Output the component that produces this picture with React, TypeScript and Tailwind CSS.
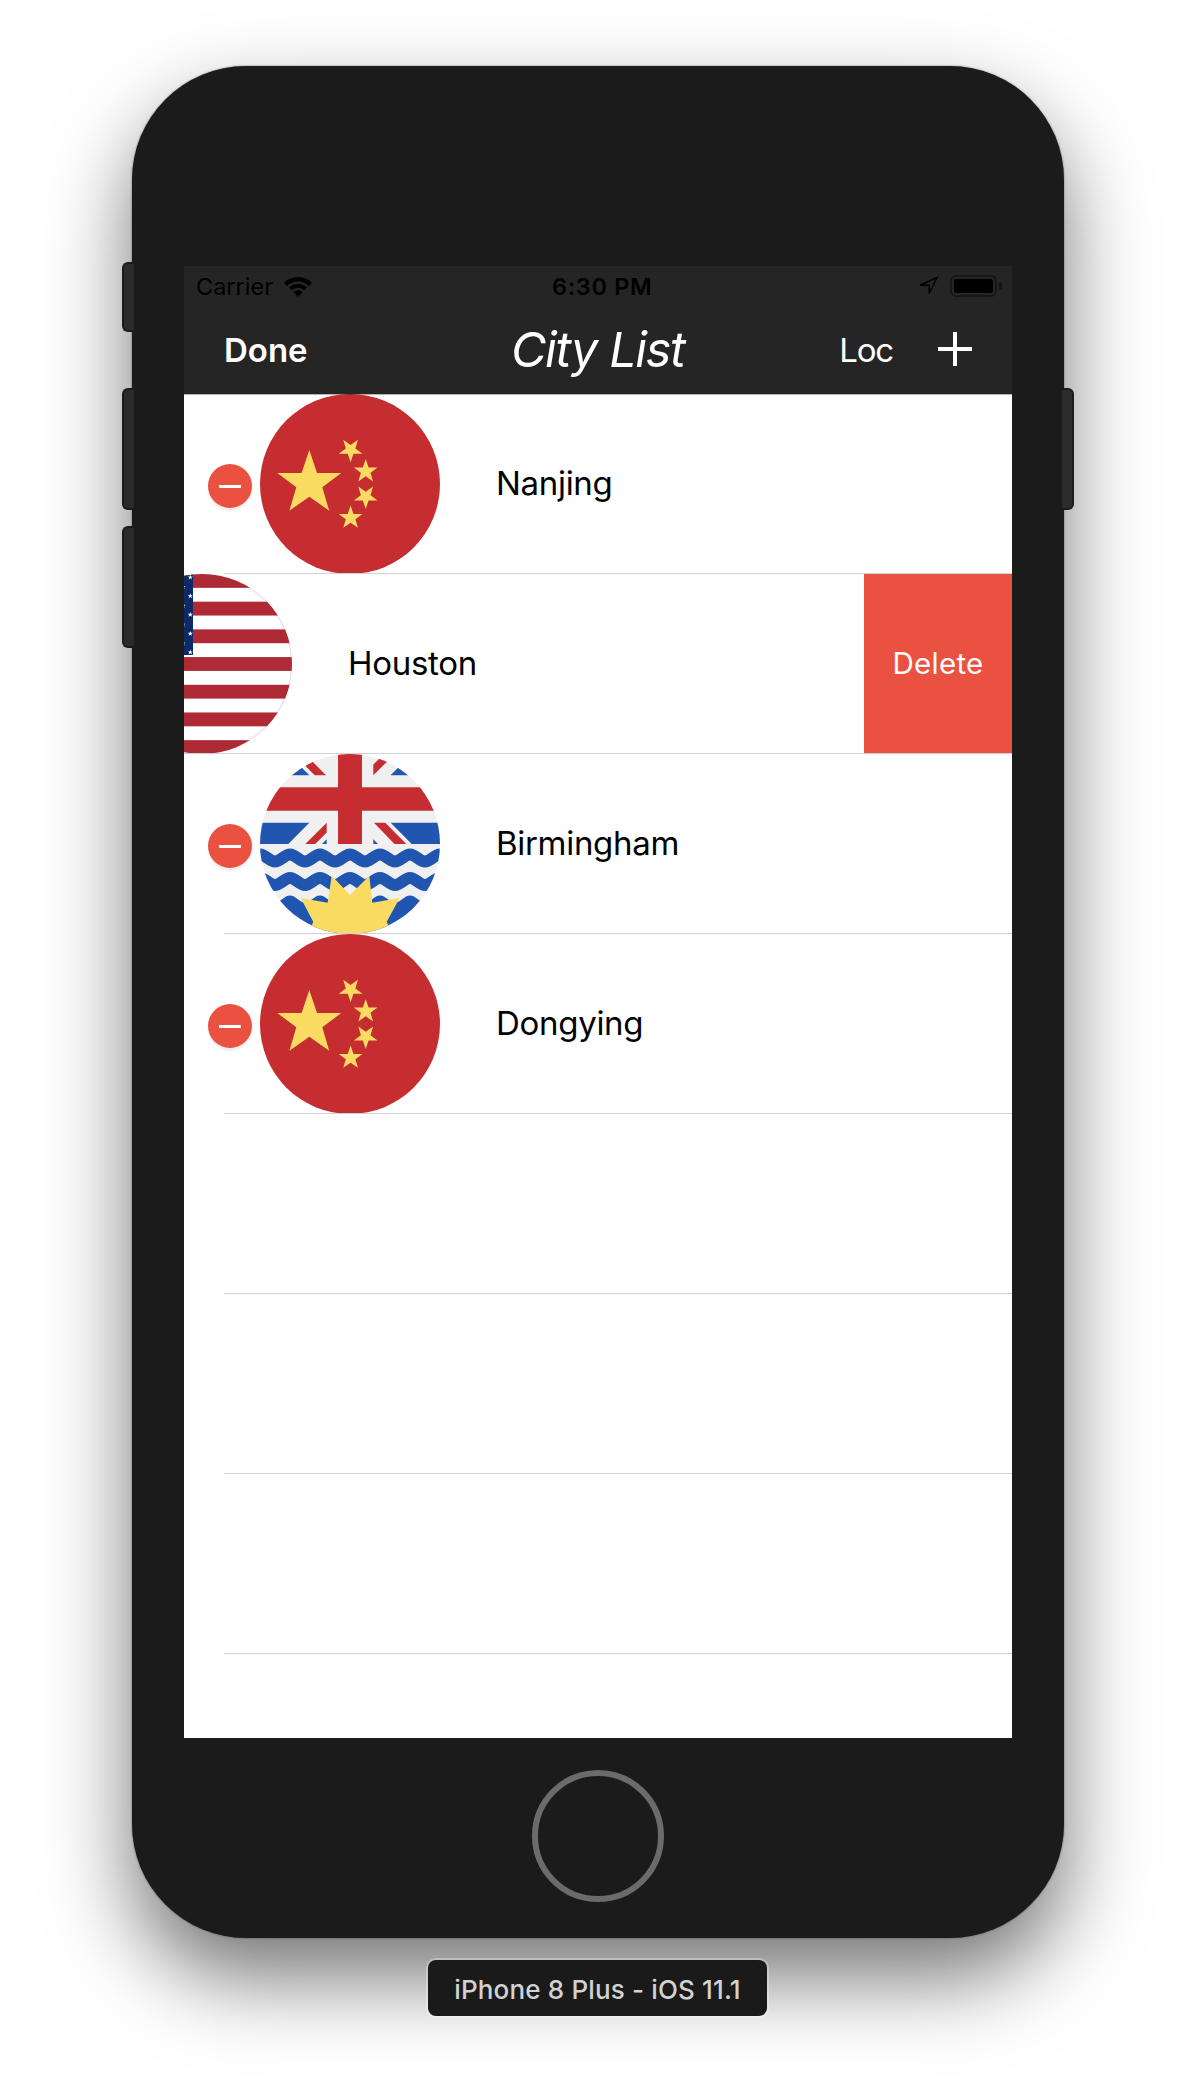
import type { ReactNode } from 'react';

const STAR =
  'M0 0L7.7 23H32L13 37.3L19.9 60.7L0 46.7L-19.9 60.7L-13 37.3L-32 23H-7.7Z';

function Flag({ label, children }: { label: string; children: ReactNode }) {
  return (
    <span role="img" aria-label={label} className="block size-[180px] shrink-0 overflow-hidden rounded-full">
      <svg viewBox="0 0 180 180" className="block size-full">
        {children}
      </svg>
    </span>
  );
}

function ChinaFlag() {
  return (
    <Flag label="China">
      <rect width="180" height="180" fill="#c52d31" />
      <g fill="#f9db61">
        <path d={STAR} transform="translate(49.3 56)" />
        <path d={STAR} transform="translate(90.6 68.3) scale(.37 -.37)" />
        <path d={STAR} transform="translate(105.7 65) scale(.37)" />
        <path d={STAR} transform="translate(105.7 115) scale(.37 -.37)" />
        <path d={STAR} transform="translate(90.6 111.4) scale(.37)" />
      </g>
    </Flag>
  );
}

function UsaFlag() {
  const h = 180 / 13;
  const miniStar = (x: number, y: number) => (
    <path key={`${x}-${y}`} d={STAR} transform={`translate(${x} ${y - 2.4}) scale(.08)`} />
  );
  return (
    <Flag label="United States">
      <rect width="180" height="180" fill="#fff" />
      {[0, 2, 4, 6, 8, 10, 12].map((i) => (
        <rect key={i} y={i * h} width="180" height={h} fill="#ae2a35" />
      ))}
      <rect width="81" height="81" fill="#0b2a66" />
      <g fill="#fff">
        {[3, 21.7, 40.3, 59.3, 78].map((y) => miniStar(78.3, y))}
        {[12.7, 31.4, 50.2, 69].map((y) => miniStar(71, y))}
      </g>
      <circle cx="90" cy="90" r="89.700" fill="none" stroke="#ae2a35" strokeOpacity=".4" strokeWidth=".7" />
    </Flag>
  );
}

/* A horizontal wavy edge whose crests fall on multiples of 30. */
function edge(y: number, amp: number) {
  let d = '';
  for (let x = 0; x < 180; x += 30) {
    d += `C${x + 5.5} ${y - amp} ${x + 9.5} ${y + amp} ${x + 15} ${y + amp}`;
    d += `C${x + 20.5} ${y + amp} ${x + 24.5} ${y - amp} ${x + 30} ${y - amp}`;
  }
  return `M0 ${y - amp}${d}`;
}

function ColumbiaFlag() {
  return (
    <Flag label="British Columbia">
      <rect width="180" height="180" fill="#f0f0f0" />
      <g fill="#2055b0">
        <path d="M49.3 21.3L28 0H0V21.3ZM130.5 21.3L152 0H180V21.3Z" />
        <path d="M0 68.7H49.3L28.3 90H0ZM130.7 68.7H180V90H151.7Z" />
        <path d="M66.7 85.2V90H62ZM113.3 85.2V90H118Z" />
      </g>
      <g fill="#c52d31">
        <path d="M54.7 21.3H66L45 0H33.5ZM113.3 21.3V10.6L124 0H134.8Z" />
        <path d="M66.7 68.7V78.5L55.2 90H45.3ZM114 68.7H125.3L146.3 90H134.5Z" />
        <path d="M78 0H102V90H78ZM0 33.3H180V56.7H0Z" />
      </g>
      <g fill="none" stroke="#2055b0" strokeWidth="12">
        <path d={edge(104, 3.5)} />
        <path d={edge(127.5, 3.5)} />
      </g>
      <path d={`${edge(145, 3.5)}V180H0Z`} fill="#2055b0" />
      <path
        d="M40.7 144L67.7 148.7L71.7 121.7L90 141L109.3 121.7L112.3 148.7L139.7 144L126.7 167.7L132 180H48L53.3 167.7Z"
        fill="#f9db61"
      />
    </Flag>
  );
}

function RemoveBadge() {
  return (
    <button
      aria-label="Remove"
      className="mr-2 mt-[4px] grid size-11 shrink-0 place-items-center rounded-full bg-[#eb5140] shadow-[0_3px_2px_rgba(0,0,0,0.07)]"
    >
      <span className="block h-[3px] w-[22px] bg-white" />
    </button>
  );
}

function CityName({ children }: { children: string }) {
  return <span className="ml-[56px] pb-px text-[33px] leading-none tracking-[-0.3px] text-black">{children}</span>;
}

function Row({ children, full = false }: { children?: ReactNode; full?: boolean }) {
  return (
    <li className="relative flex h-[180px] shrink-0 items-center overflow-hidden">
      {children}
      <span className={`absolute bottom-0 right-0 h-px bg-[#d2d2d4] ${full ? 'left-0' : 'left-10'}`} />
    </li>
  );
}

function EditableRow({ flag, name }: { flag: ReactNode; name: string }) {
  return (
    <Row>
      <div className="flex items-center pl-6">
        <RemoveBadge />
        {flag}
        <CityName>{name}</CityName>
      </div>
    </Row>
  );
}

function StatusBar() {
  return (
    <div className="grid h-10 grid-cols-[368px_1fr_auto] items-center pt-[2px] text-[23.5px] leading-none text-black">
      <div className="flex items-center gap-[11px] pl-3">
        <span>Carrier</span>
        <svg viewBox="0 0 28 20" className="h-5 w-7">
          <path d="M14 0C19.3 0 24.2 2.1 28 5.7L25 8.9C22 6 18.2 4.4 14 4.4S6 6 3 8.9L0 5.7C3.8 2.1 8.7 0 14 0Z" />
          <path d="M14 6.9C17.4 6.9 20.6 8.2 23 10.6L20.2 13.3C18.5 11.7 16.3 10.8 14 10.8S9.5 11.7 7.8 13.3L5 10.6C7.4 8.2 10.6 6.9 14 6.9Z" />
          <path d="M14 13.2C15.6 13.2 17.2 13.9 18.5 15L14 20L9.5 15C10.8 13.9 12.4 13.2 14 13.2Z" />
        </svg>
      </div>
      <span className="font-semibold tracking-[0.65px]">6:30 PM</span>
      <div className="flex items-center gap-[11px] pb-[2px] pr-[10px]">
        <svg viewBox="0 0 21 20" className="h-5 w-[21px]" fill="none" stroke="#000" strokeWidth="1.5">
          <path d="M2 9.3L19 1.5L11.2 17.5V9.3Z" />
        </svg>
        <div className="flex items-center gap-[2px]">
          <span className="block h-[22px] w-[47px] rounded-[6px] border-2 border-[#171717] p-[2px]">
            <span className="block size-full rounded-[2px] bg-black" />
          </span>
          <span className="block h-2 w-[3px] rounded-r-full bg-[#151515]" />
        </div>
      </div>
    </div>
  );
}

function NavBar() {
  return (
    <div className="grid h-[88px] grid-cols-[327px_1fr_auto] items-center text-[33px] leading-none text-white">
      <span className="pl-10 font-semibold">Done</span>
      <h1 className="whitespace-nowrap pt-px text-[48.5px] italic leading-none tracking-[-1.35px]">City List</h1>
      <div className="flex items-center gap-[45px] pr-10">
        <span className="tracking-[-1.2px]">Loc</span>
        <svg viewBox="0 0 34 34" className="mb-[2px] size-[34px]">
          <path d="M17 0V34M0 17H34" stroke="#fff" strokeWidth="4" />
        </svg>
      </div>
    </div>
  );
}

const leftKey = 'absolute -left-[10px] w-3 rounded-l-[6px] border-2 border-r-0 border-[#1b1b1b] bg-[#2b2b2b]';
const rightKey = 'absolute -right-[10px] w-3 rounded-r-[6px] border-2 border-l-0 border-[#1b1b1b] bg-[#2b2b2b]';

export default function App() {
  return (
    <main className="flex h-[2100px] w-[1196px] flex-col items-center overflow-hidden bg-white pt-[66px] font-[Inter,sans-serif]">
      <div className="relative h-[1872px] w-[932px] shrink-0">
        <div className="flex h-full flex-col items-center rounded-[114px] bg-[#1b1b1b] pt-[200px] shadow-[0_0_2px_rgba(0,0,0,0.5),0_40px_84px_rgba(0,0,0,0.54)]">
          <section className="flex h-[1472px] w-[828px] shrink-0 flex-col overflow-hidden bg-white">
            <header className="shrink-0 bg-[#252525]">
              <StatusBar />
              <NavBar />
            </header>
            <ul className="relative flex min-h-0 flex-1 flex-col overflow-hidden">
              <EditableRow flag={<ChinaFlag />} name="Nanjing" />
              <Row full>
                <div className="-ml-[72px] flex flex-1 items-center">
                  <UsaFlag />
                  <CityName>Houston</CityName>
                </div>
                <button className="h-full w-[148px] bg-[#eb5140] text-[29.5px] leading-none tracking-[0.3px] text-white">
                  Delete
                </button>
              </Row>
              <EditableRow flag={<ColumbiaFlag />} name="Birmingham" />
              <EditableRow flag={<ChinaFlag />} name="Dongying" />
              <Row />
              <Row />
              <Row />
              <Row />
              <span className="absolute inset-x-0 top-0 h-px bg-black/30" />
            </ul>
          </section>
          <button aria-label="Home" className="mt-8 size-[132px] rounded-full border-[6px] border-[#6b6b6b]" />
        </div>
        <span className={`${leftKey} top-[196px] h-[70px]`} />
        <span className={`${leftKey} top-[322px] h-[122px]`} />
        <span className={`${leftKey} top-[460px] h-[122px]`} />
        <span className={`${rightKey} top-[322px] h-[122px]`} />
      </div>
      <div className="relative mr-px mt-[22px] grid h-14 w-[339px] shrink-0 place-items-center rounded-[8px] bg-[#1a1a1a] pt-[3px] text-[26px] font-medium leading-none tracking-[0.16px] text-[#d2d2d2] shadow-[0_0_0_2px_rgba(255,255,255,0.3)]">
        <span className="whitespace-nowrap">iPhone 8 Plus - iOS 11.1</span>
      </div>
    </main>
  );
}
